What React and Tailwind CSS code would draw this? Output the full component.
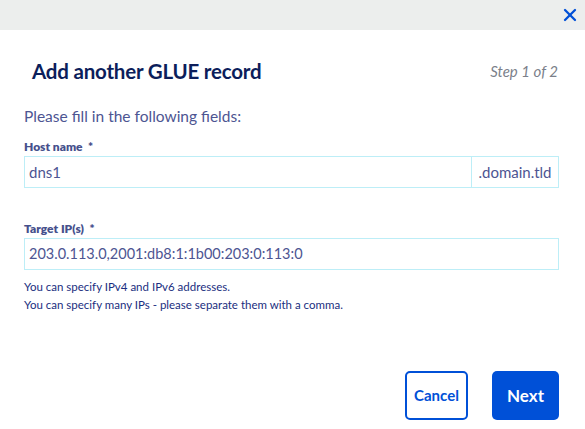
import { X } from 'lucide-react';

const App = () => {
  return (
    <div className="w-[585px] h-[429px] bg-white flex flex-col font-['Lato',sans-serif]">
      <div className="h-[30px] bg-[#eceeed] flex items-center justify-end pr-[5px]">
        <X size={20} strokeWidth={2.75} className="text-[#0050d7]" />
      </div>

      <div className="flex items-center justify-between pl-[32px] pr-[27px] mt-[27px] h-[28px]">
        <h2 className="text-[20.5px] font-bold text-[#0c1e5b] tracking-[-0.2px]">Add another GLUE record</h2>
        <span className="text-[15px] italic text-[#7b7f8a]">Step 1 of 2</span>
      </div>

      <div className="px-[24px] flex flex-col">
        <p className="mt-[21px] text-[15.5px] text-[#4d5592] leading-[20px]">Please fill in the following fields:</p>

        <label className="mt-[13px] text-[12px] font-extrabold text-[#46508c] leading-[15px]">Host name&nbsp; *</label>
        <div className="mt-[2px] flex h-[32px] border border-[#bdeef7] w-[535px]">
          <div className="flex-1 flex items-center px-[4px] text-[15px] text-[#4d5592]">dns1</div>
          <div className="w-[87px] border-l border-[#bdeef7] flex items-center justify-center text-[15px] text-[#4d5592]">.domain.tld</div>
        </div>

        <label className="mt-[33px] text-[12px] font-extrabold text-[#46508c] leading-[15px]">Target IP(s)&nbsp; *</label>
        <div className="mt-[2px] flex items-center h-[32px] border border-[#bdeef7] w-[535px] px-[4px] text-[14.5px] text-[#4d5592]">
          203.0.113.0,2001:db8:1:1b00:203:0:113:0
        </div>

        <p className="mt-[8px] text-[11.5px] text-[#1a2e80] leading-[18px]">You can specify IPv4 and IPv6 addresses.</p>
        <p className="text-[11.5px] text-[#1a2e80] leading-[18px]">You can specify many IPs - please separate them with a comma.</p>
      </div>

      <div className="mt-[57px] flex justify-end gap-[24px] pr-[26px]">
        <button className="w-[63px] h-[49px] border-2 border-[#0050d7] rounded-[5px] bg-white text-[#0050d7] font-bold text-[15px]">Cancel</button>
        <button className="w-[67px] h-[49px] rounded-[5px] bg-[#0050d7] text-white font-bold text-[17px]">Next</button>
      </div>
    </div>
  );
};

export default App;
